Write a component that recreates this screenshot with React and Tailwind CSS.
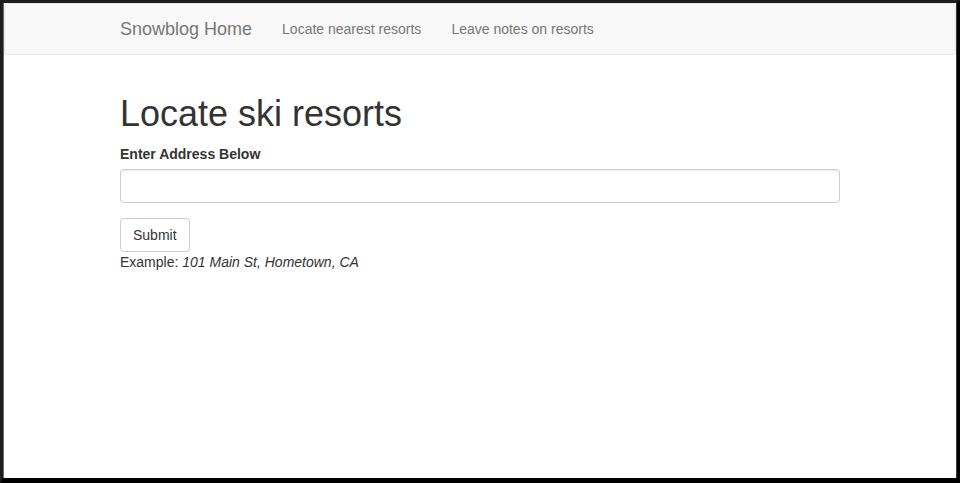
import { useState } from 'react';

// --- NAVBAR ---
const Navbar = () => (
    <nav className="mb-[20px] min-h-[50px] rounded-[4px] border border-[#e7e7e7] bg-[#f8f8f8]">
        <div className="mx-auto flex w-[750px] px-[15px]">
            <a href="#" className="-ml-[15px] h-[50px] px-[15px] py-[15px] text-[18px] leading-[20px] text-[#777]">Snowblog Home</a>
            <ul className="flex">
                <li><a href="#" className="block px-[15px] py-[15px] text-[14px] leading-[20px] text-[#777]">Locate nearest resorts</a></li>
                <li><a href="#" className="block px-[15px] py-[15px] text-[14px] leading-[20px] text-[#777]">Leave notes on resorts</a></li>
            </ul>
        </div>
    </nav>
);

export default function App() {
    const [address, setAddress] = useState('');

    return (
        <div className="box-border h-screen w-full border-t-[3px] border-l-[3px] border-r-[3px] border-b-[5px] border-t-[#1e1e1e] border-l-[#1e1e1e] border-r-black border-b-black text-[14px] leading-[20px] text-[#333] font-['Liberation_Sans',Arial,sans-serif]">
            <div className="h-full border-x border-l-[#6b6b6b] border-r-[#3a3a3a] bg-white">
                <Navbar />
                <div className="mx-auto w-[750px] px-[15px] pt-[19px]">
                    <h1 className="mb-[10px] text-[36px] leading-[1.1] font-medium">Locate ski resorts</h1>
                    <form onSubmit={(e) => e.preventDefault()}>
                        <div className="mb-[15px]">
                            <label className="mb-[5px] block font-bold">Enter Address Below</label>
                            <input
                                type="text"
                                value={address}
                                onChange={(e) => setAddress(e.target.value)}
                                className="block h-[34px] w-full rounded-[4px] border border-[#ccc] px-[12px] py-[6px] shadow-[inset_0_1px_1px_rgba(0,0,0,0.075)] outline-none"
                            />
                        </div>
                        <button type="submit" className="rounded-[4px] border border-[#ccc] bg-white px-[12px] py-[6px] text-[14px] leading-[20px] text-[#333]">Submit</button>
                    </form>
                    <div>Example: <em>101 Main St, Hometown, CA</em></div>
                </div>
            </div>
        </div>
    );
}
